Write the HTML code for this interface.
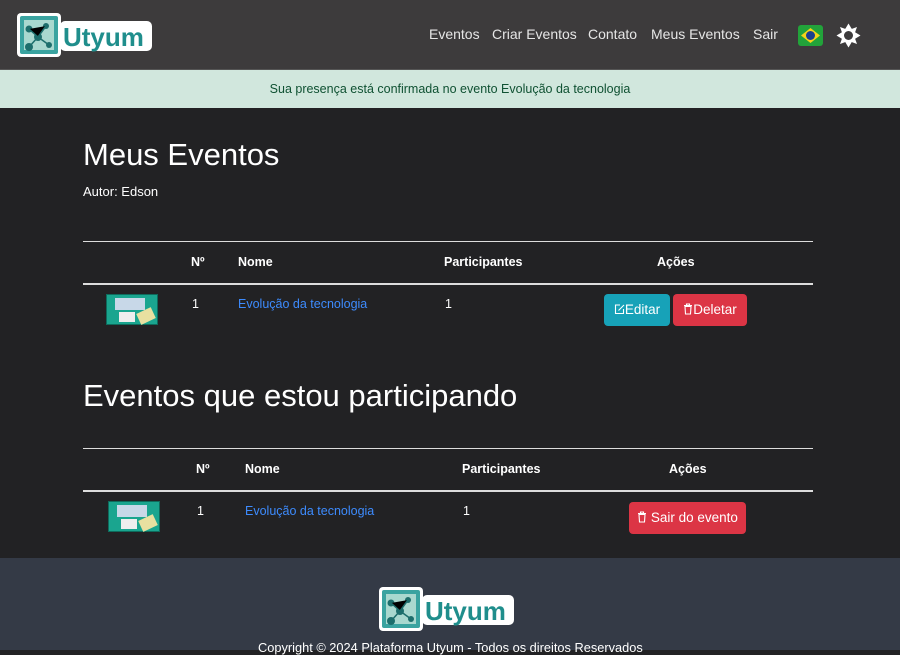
<!DOCTYPE html>
<html><head><meta charset="utf-8"><style>
*{margin:0;padding:0;box-sizing:border-box}
body{width:900px;height:650px;overflow:hidden;background:#222224;font-family:"Liberation Sans",sans-serif;color:#fff;position:relative}
.a{position:absolute;white-space:nowrap}
.hdr{position:absolute;left:0;top:0;width:900px;height:70px;background:#3d3b3c;border-bottom:1px solid #555}
.nav{font-size:14px;color:#e6e6e6;top:26px}
.alert{position:absolute;top:70px;left:0;width:900px;height:38px;background:#d1e7dd;color:#0f5132;font-size:12.5px;text-align:center;line-height:38px}
.line{position:absolute;left:83px;width:730px;height:1px;background:#ddd}
.th{font-size:12.5px;font-weight:bold}
.td{font-size:12.5px}
.lnk{color:#3d8bfd}
.btn{position:absolute;border-radius:4px;font-size:13.5px;color:#fff;text-align:center;line-height:32px;height:32px}
.btn svg{vertical-align:-1px}
.thumb{position:absolute;width:52px;height:31px;background:#1aa58f;border:1px solid #0e6b5c}
.thumb i{position:absolute;left:8px;top:3px;width:30px;height:12px;background:#c8d8e8}
.thumb b{position:absolute;left:12px;top:17px;width:16px;height:10px;background:#eee}
.thumb s{position:absolute;left:31px;top:15px;width:16px;height:12px;background:#e8e0a0;transform:rotate(-25deg)}
.footer{position:absolute;left:0;top:558px;width:900px;height:92px;background:#343a46}
</style></head><body>
<div class="hdr"></div>
<svg class="a" style="left:16px;top:12px" width="140" height="48" viewBox="0 0 140 48">
<rect x="1" y="1" width="44" height="44" rx="4" fill="#fff"/>
<rect x="4" y="4" width="38" height="38" rx="2" fill="#3aa3a0"/>
<rect x="8" y="8" width="30" height="30" fill="#a9d8cf"/>
<circle cx="13" cy="17" r="3.5" fill="#1d6e6c"/><circle cx="30" cy="14" r="3" fill="#1d6e6c"/><circle cx="22" cy="25" r="4" fill="#1d6e6c"/><circle cx="13" cy="35" r="4" fill="#1d6e6c"/><circle cx="33" cy="33" r="3" fill="#1d6e6c"/>
<path d="M13 17L22 25L30 14M22 25L13 35M22 25L33 33" stroke="#1d6e6c" stroke-width="1.5"/>
<rect x="44" y="9" width="92" height="30" rx="5" fill="#fff"/>
<text x="47" y="34" font-family="Liberation Sans" font-weight="bold" font-size="26" fill="#1f8e8c">Utyum</text>
</svg>
<div class="a nav" style="left:429px">Eventos</div>
<div class="a nav" style="left:492px">Criar Eventos</div>
<div class="a nav" style="left:588px">Contato</div>
<div class="a nav" style="left:651px">Meus Eventos</div>
<div class="a nav" style="left:753px">Sair</div>
<svg class="a" style="left:798px;top:25px" width="25" height="21" viewBox="0 0 25 21"><rect width="25" height="21" rx="3" fill="#22a33a"/><path d="M12.5 3L22 10.5L12.5 18L3 10.5Z" fill="#f5d21a"/><circle cx="12.5" cy="10.5" r="4.5" fill="#1d3f8f"/></svg>
<svg class="a" style="left:836px;top:23px" width="25" height="25" viewBox="-12.5 -12.5 25 25"><g fill="#fff"><path d="M0-12L3-7H-3ZM0 12L3 7H-3ZM-12 0L-7 3V-3ZM12 0L7 3V-3ZM-8.5-8.5L-3-6.5L-6.5-3ZM8.5 8.5L3 6.5L6.5 3ZM8.5-8.5L6.5-3L3-6.5ZM-8.5 8.5L-6.5 3L-3 6.5Z"/><circle r="7.5"/></g><circle r="4.5" fill="#3d3b3c"/></svg>
<div class="alert">Sua presença está confirmada no evento Evolução da tecnologia</div>

<div class="a" style="left:83px;top:137px;font-size:31px">Meus Eventos</div>
<div class="a" style="left:83px;top:184px;font-size:13px">Autor: Edson</div>
<div class="line" style="top:241px"></div>
<div class="a th" style="left:191px;top:255px">Nº</div>
<div class="a th" style="left:238px;top:255px">Nome</div>
<div class="a th" style="left:444px;top:255px">Participantes</div>
<div class="a th" style="left:657px;top:255px">Ações</div>
<div class="line" style="top:283px;height:2px"></div>
<div class="thumb" style="left:106px;top:294px"><i></i><b></b><s></s></div>
<div class="a td" style="left:192px;top:297px">1</div>
<div class="a td lnk" style="left:238px;top:297px">Evolução da tecnologia</div>
<div class="a td" style="left:445px;top:297px">1</div>
<div class="btn" style="left:604px;top:294px;width:66px;background:#17a2b8"><svg width="11" height="11" viewBox="0 0 11 11"><path d="M6 1H1.5V9.5H9.5V5" fill="none" stroke="#fff" stroke-width="1.1"/><path d="M4.5 6.5L10 1" stroke="#fff" stroke-width="1.1"/></svg>Editar</div>
<div class="btn" style="left:673px;top:294px;width:74px;background:#dc3545"><svg width="10" height="12" viewBox="0 0 10 12"><path d="M1 2.5H9M3.5 2.5V1H6.5V2.5M2 3.5L2.5 11H7.5L8 3.5Z" fill="none" stroke="#fff" stroke-width="1.1"/></svg>Deletar</div>

<div class="a" style="left:83px;top:378px;font-size:31px">Eventos que estou participando</div>
<div class="line" style="top:448px"></div>
<div class="a th" style="left:196px;top:462px">Nº</div>
<div class="a th" style="left:245px;top:462px">Nome</div>
<div class="a th" style="left:462px;top:462px">Participantes</div>
<div class="a th" style="left:669px;top:462px">Ações</div>
<div class="line" style="top:490px;height:2px"></div>
<div class="thumb" style="left:108px;top:501px"><i></i><b></b><s></s></div>
<div class="a td" style="left:197px;top:504px">1</div>
<div class="a td lnk" style="left:245px;top:504px">Evolução da tecnologia</div>
<div class="a td" style="left:463px;top:504px">1</div>
<div class="btn" style="left:629px;top:502px;width:117px;background:#dc3545"><svg width="10" height="12" viewBox="0 0 10 12"><path d="M1 2.5H9M3.5 2.5V1H6.5V2.5M2 3.5L2.5 11H7.5L8 3.5Z" fill="none" stroke="#fff" stroke-width="1.1"/></svg> Sair do evento</div>

<div class="footer"></div>
<svg class="a" style="left:378px;top:586px" width="140" height="48" viewBox="0 0 140 48">
<rect x="1" y="1" width="44" height="44" rx="4" fill="#fff"/>
<rect x="4" y="4" width="38" height="38" rx="2" fill="#3aa3a0"/>
<rect x="8" y="8" width="30" height="30" fill="#a9d8cf"/>
<circle cx="13" cy="17" r="3.5" fill="#1d6e6c"/><circle cx="30" cy="14" r="3" fill="#1d6e6c"/><circle cx="22" cy="25" r="4" fill="#1d6e6c"/><circle cx="13" cy="35" r="4" fill="#1d6e6c"/><circle cx="33" cy="33" r="3" fill="#1d6e6c"/>
<path d="M13 17L22 25L30 14M22 25L13 35M22 25L33 33" stroke="#1d6e6c" stroke-width="1.5"/>
<rect x="44" y="9" width="92" height="30" rx="5" fill="#fff"/>
<text x="47" y="34" font-family="Liberation Sans" font-weight="bold" font-size="26" fill="#1f8e8c">Utyum</text>
</svg>
<div class="a" style="left:258px;top:640px;font-size:12.8px">Copyright © 2024 Plataforma Utyum - Todos os direitos Reservados</div>
</body></html>
